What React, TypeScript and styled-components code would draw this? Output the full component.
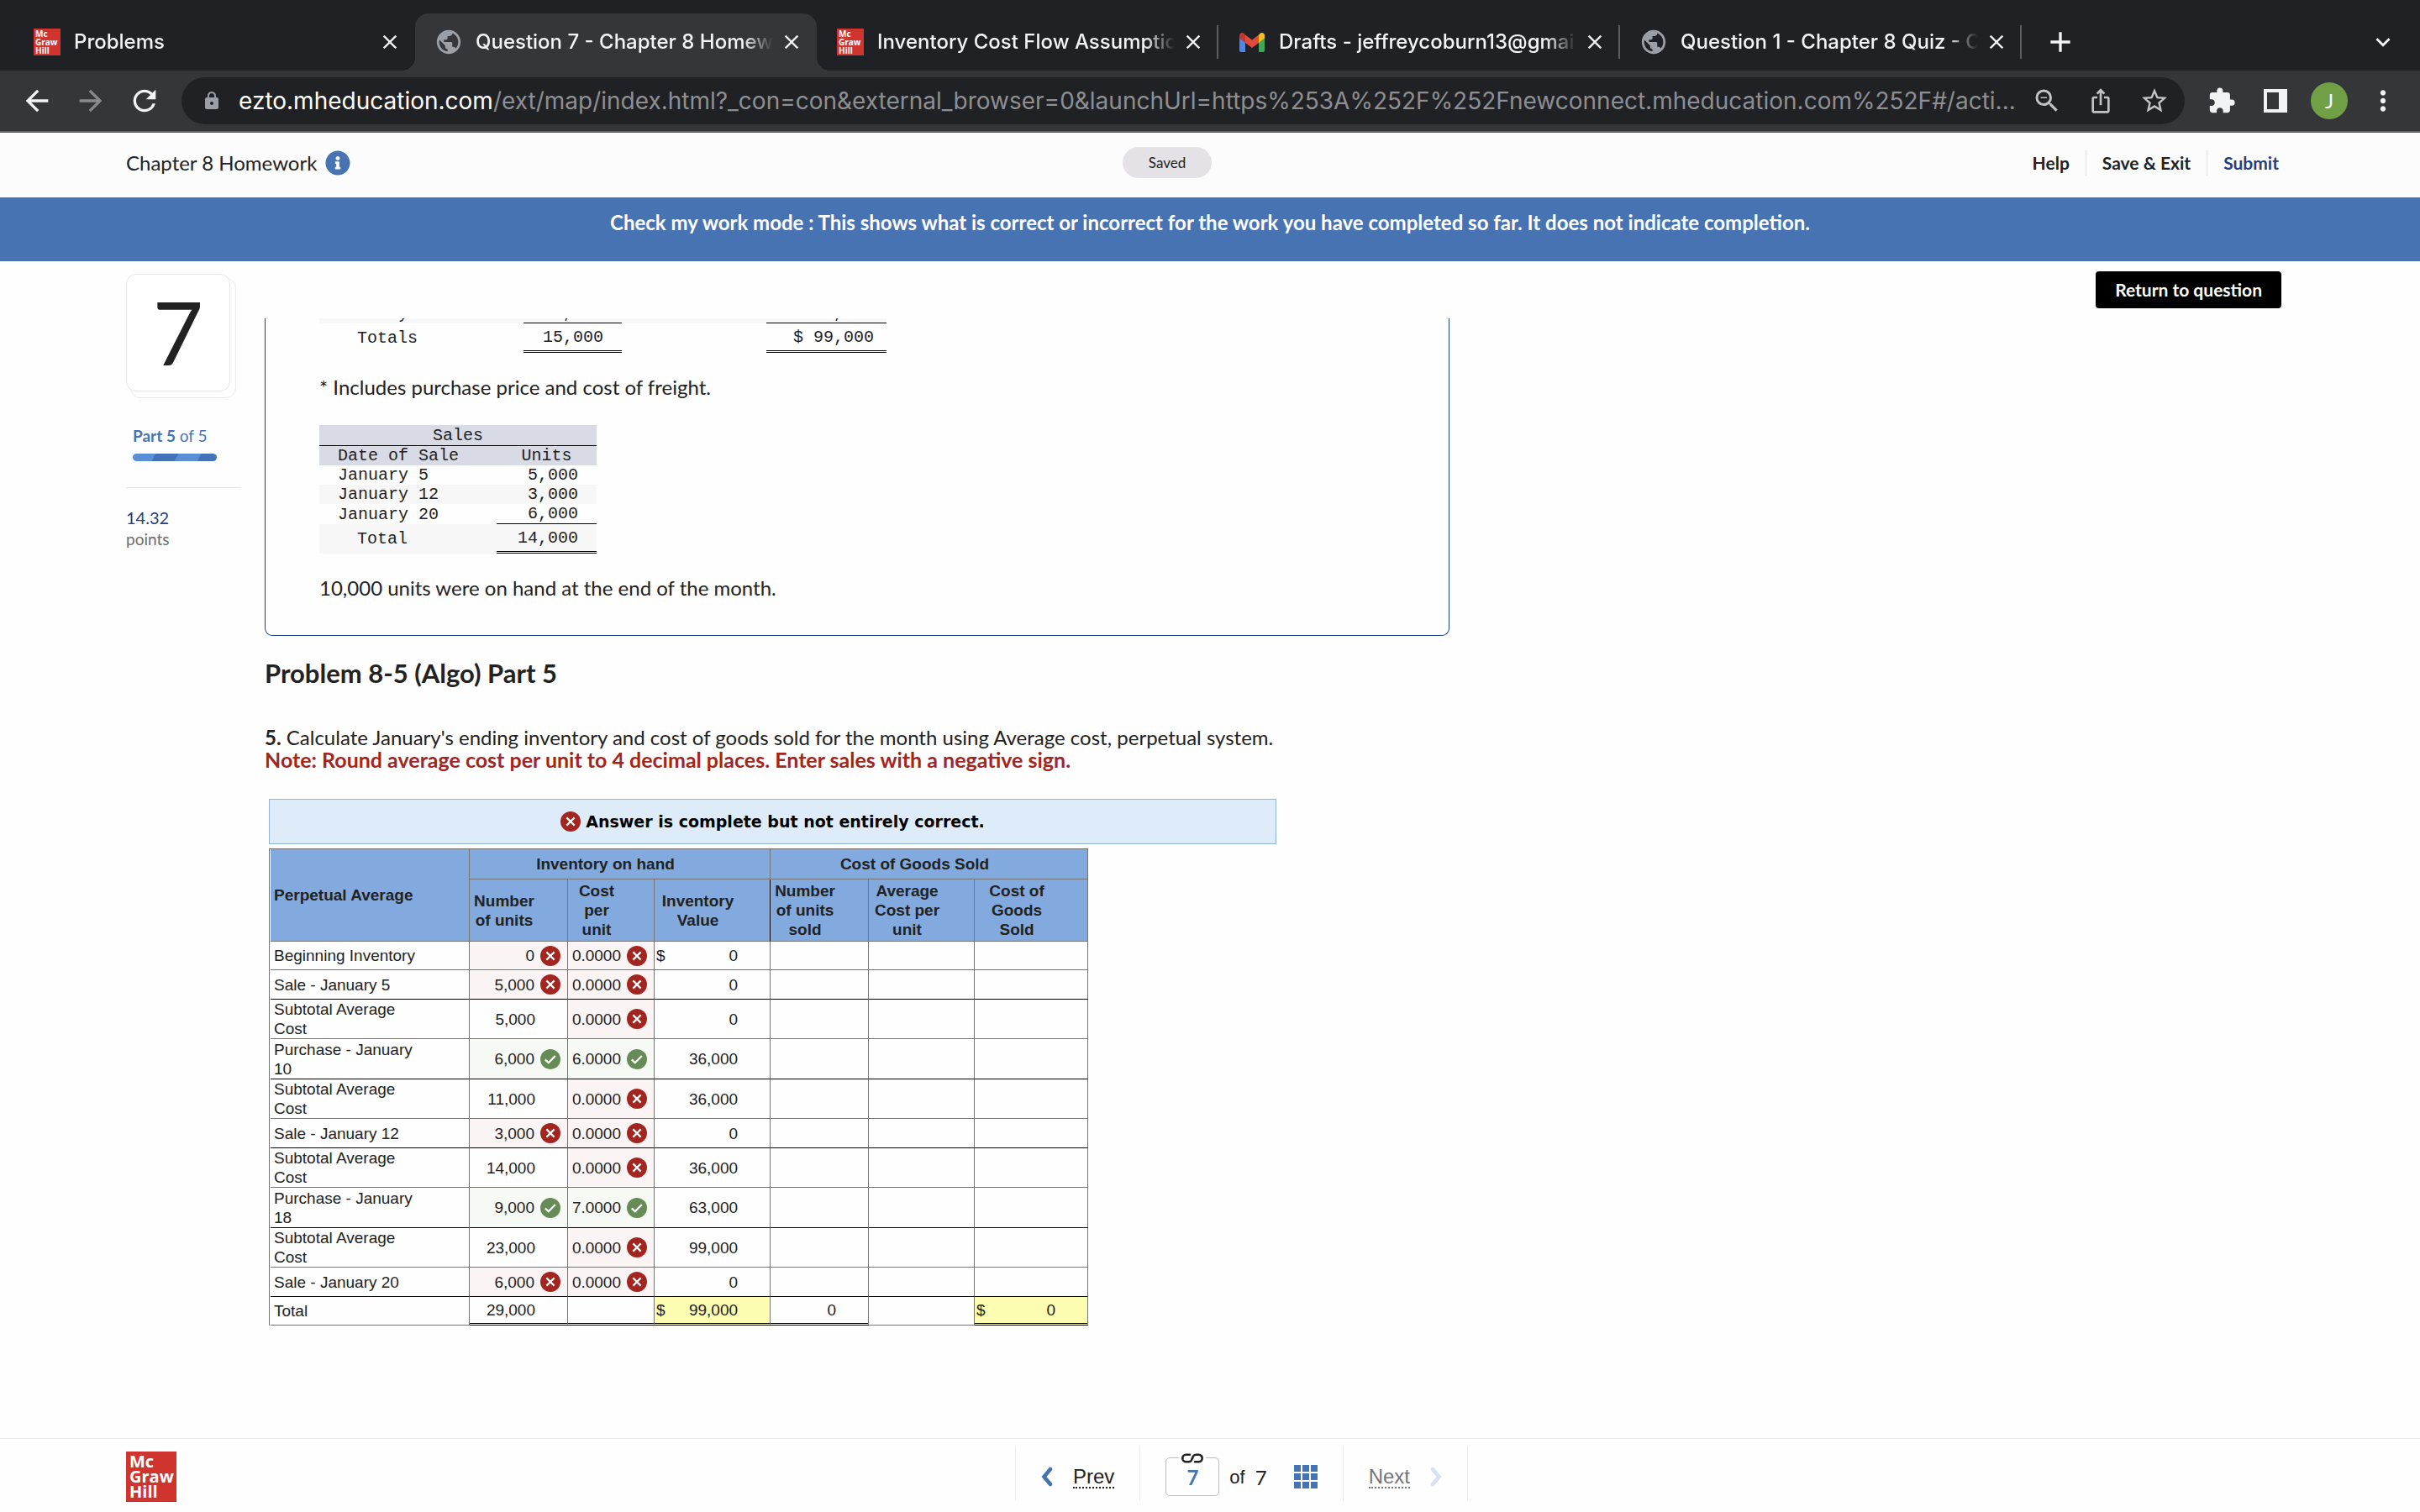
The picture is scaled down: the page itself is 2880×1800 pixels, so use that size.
import React from "react";
import styled, { createGlobalStyle, css } from "styled-components";
import {
  MdAdd,
  MdArrowBack,
  MdArrowForward,
  MdClose,
  MdExtension,
  MdIosShare,
  MdKeyboardArrowDown,
  MdLock,
  MdMoreVert,
  MdOutlineZoomOut,
  MdPublic,
  MdRefresh,
  MdStarBorder,
} from "react-icons/md";
import { FaInfoCircle } from "react-icons/fa";

const ui = '"Inter", "Liberation Sans", sans-serif';
const body = '"Lato", "Liberation Sans", sans-serif';
const sheet = '"Liberation Sans", Arial, sans-serif';
const mono = '"Liberation Mono", "Courier New", monospace';

const blue = "#4873b3";
const navy = "#1f4080";
const ink = "#222222";
const grid = "#757575";
const wrongRed = "#a2261f";
const rightGreen = "#678b57";

const GlobalStyle = createGlobalStyle`
  *, *::before, *::after { box-sizing: border-box; }
  body { margin: 0; background: #fefefe; color: ${ink}; font-family: ${body}; font-size: 24px; line-height: 27px; }
  button { border: 0; padding: 0; margin: 0; background: none; color: inherit; font: inherit; cursor: pointer; }
  h2, p { margin: 0; }
  a { color: inherit; text-decoration: none; }
  svg { display: block; flex: none; }
`;

const Page = styled.div`
  min-height: 100vh;
  display: flex;
  flex-direction: column;
`;

/* ---------- browser chrome ---------- */

const TabStrip = styled.div`
  display: flex;
  align-items: stretch;
  height: 84px;
  padding: 16px 24px 0 16px;
  background: #202124;
  color: #f3f4f6;
  font-family: ${ui};
`;

const TabBox = styled.div<{ $active?: boolean; $divider?: boolean }>`
  position: relative;
  flex: 0 1 478px;
  min-width: 0;
  display: flex;
  align-items: center;
  padding: 0 16px 0 24px;
  ${p =>
    p.$divider &&
    css`
      background: linear-gradient(#5b5d61, #5b5d61) right center / 2px 40px no-repeat;
    `}
  ${p =>
    p.$active &&
    css`
      background: #35363a;
      border-radius: 16px 16px 0 0;
      &::before,
      &::after {
        content: "";
        position: absolute;
        bottom: 0;
        width: 16px;
        height: 16px;
      }
      &::before {
        right: 100%;
        background: radial-gradient(circle at 0 0, transparent 16px, #35363a 16px);
      }
      &::after {
        left: 100%;
        background: radial-gradient(circle at 100% 0, transparent 16px, #35363a 16px);
      }
    `}
`;

const Favicon = styled.span`
  flex: none;
  width: 32px;
  margin-right: 16px;
  display: flex;
  justify-content: center;
  color: #9aa0a6;
`;

const TabTitle = styled.span`
  flex: 1;
  min-width: 0;
  overflow: hidden;
  white-space: nowrap;
  font-size: 24px;
  line-height: 32px;
  font-weight: 500;
  mask-image: linear-gradient(to left, transparent, #000 36px);
`;

const IconButton = styled.button<{ $width: number; $tone?: string }>`
  flex: none;
  width: ${p => p.$width}px;
  display: flex;
  align-items: center;
  justify-content: center;
  color: ${p => p.$tone ?? "#f1f3f4"};
`;

const TabClose = styled(IconButton)`
  margin-left: 8px;
`;

const NewTab = styled(IconButton)`
  margin: 0 auto 0 26px;
`;

const Toolbar = styled.div`
  display: flex;
  align-items: center;
  height: 74px;
  padding: 0 12px;
  background: #35363a;
  border-bottom: 2px solid #5f6066;
  font-family: ${ui};
`;

const Omnibox = styled.div`
  flex: 1;
  min-width: 0;
  display: flex;
  align-items: center;
  height: 56px;
  margin: 0 12px;
  padding: 0 4px 0 24px;
  border-radius: 28px;
  background: #202124;
  color: #9aa0a6;
`;

const Url = styled.span`
  flex: 1;
  min-width: 0;
  margin-left: 20px;
  overflow: hidden;
  white-space: nowrap;
  font-size: 28px;
  line-height: 36px;
  color: #8d8f92;
  b {
    font-weight: 400;
    color: #ffffff;
  }
`;

const Avatar = styled.span`
  width: 44px;
  height: 44px;
  border-radius: 50%;
  background: #719f46;
  color: #ffffff;
  font-family: ${body};
  font-size: 24px;
  line-height: 44px;
  text-align: center;
`;

const SidePanelIcon = styled.span`
  width: 28px;
  height: 28px;
  border: 4px solid #f1f3f4;
  border-right-width: 10px;
`;

/* ---------- publisher logo ---------- */

const Logo = styled.span<{ $size: "small" | "large" }>`
  flex: none;
  display: flex;
  flex-direction: column;
  justify-content: center;
  background: #cf342f;
  color: #ffffff;
  font-family: "Open Sans", sans-serif;
  font-weight: 700;
  ${p =>
    p.$size === "large"
      ? css`
          width: 60px;
          height: 60px;
          padding-left: 4px;
          font-size: 20px;
          line-height: 18px;
        `
      : css`
          width: 32px;
          height: 32px;
          padding-left: 2px;
          font-size: 10px;
          line-height: 10px;
        `}
`;

function McGrawHill({ size }: { size: "small" | "large" }) {
  return (
    <Logo $size={size}>
      <span>Mc</span>
      <span>Graw</span>
      <span>Hill</span>
    </Logo>
  );
}

function GmailIcon() {
  return (
    <svg width="30" height="23" viewBox="0 0 30 23">
      <path d="M0 4v17a2 2 0 0 0 2 2h5V9z" fill="#4a86f0" />
      <path d="M30 4v17a2 2 0 0 1-2 2h-5V9z" fill="#3fa757" />
      <path d="M23 2.4V12l7-5.4V3.2C30 .4 26.700-1 24.600.7z" fill="#f5bd1d" />
      <path d="M7 12V2.400l8 6.200 8-6.200V12l-8 6z" fill="#e04a3c" />
      <path d="M0 3.200v3.400L7 12V2.400L5.400.7C3.300-1 0 .4 0 3.200z" fill="#c3382d" />
    </svg>
  );
}

/* ---------- assignment header ---------- */

const Header = styled.header`
  display: flex;
  align-items: center;
  justify-content: space-between;
  height: 77px;
  padding: 0 168px 6px 150px;
  background: #fcfcfc;
`;

const Title = styled.div`
  display: flex;
  align-items: center;
  gap: 10px;
`;

const SavedPill = styled.span`
  padding: 0 31px;
  border-radius: 19px;
  background: #e4e2e6;
  font-size: 17px;
  line-height: 37px;
`;

const HeaderNav = styled.nav`
  display: flex;
  padding-left: 58px;
  font-size: 21px;
  font-weight: 700;
  line-height: 30px;
`;

const NavLink = styled.a<{ $primary?: boolean }>`
  color: ${p => (p.$primary ? navy : ink)};
  & + & {
    margin-left: 19px;
    padding-left: 19px;
    border-left: 1px solid #e4e4e4;
  }
`;

const ModeBanner = styled.div`
  height: 76px;
  padding-top: 16px;
  background: ${blue};
  color: #ffffff;
  font-weight: 700;
  line-height: 28px;
  text-align: center;
`;

/* ---------- question layout ---------- */

const Main = styled.main`
  flex: 1;
  display: grid;
  grid-template-columns: 165px 1fr;
  align-items: start;
  padding: 0 165px 60px 150px;
`;

const Sidebar = styled.aside`
  padding: 15px 28px 0 0;
`;

const NumberStack = styled.div`
  position: relative;
  padding: 0 7px 8px 0;
  width: 131px;
  &::before {
    content: "";
    position: absolute;
    inset: 5px 0 0 5px;
    border: 1px solid #ebebeb;
    border-radius: 12px;
  }
`;

const NumberCard = styled.div`
  position: relative;
  height: 140px;
  border: 1px solid #e6e6e6;
  border-radius: 12px;
  background: #ffffff;
  font-size: 104px;
  line-height: 136px;
  text-align: center;
`;

const PartLabel = styled.div`
  margin: 33px 0 9px 8px;
  color: ${blue};
  font-size: 19px;
  line-height: 24px;
`;

const PartBar = styled.div`
  width: 100px;
  height: 9px;
  margin-left: 8px;
  border-radius: 5px;
  background: repeating-linear-gradient(118deg, #5890d3 0 24px, #4372b8 24px 48px);
`;

const Points = styled.div`
  margin-top: 31px;
  padding-top: 22px;
  border-top: 1px solid #e4e4e4;
  color: #6c6c6c;
  font-size: 19px;
  line-height: 26px;
`;

const PointsValue = styled.div`
  color: ${navy};
  font-size: 20px;
`;

const ActionRow = styled.div`
  display: flex;
  justify-content: flex-end;
  padding: 12px 0;
`;

const ReturnButton = styled.button`
  height: 44px;
  padding: 0 23px 2px;
  border-radius: 4px;
  background: #000000;
  color: #ffffff;
  font-size: 21px;
  font-weight: 700;
`;

const Passage = styled.section`
  max-width: 1410px;
  overflow: hidden;
  padding: 0 64px 43px;
  border: solid ${navy};
  border-width: 0 1px 1px;
  border-radius: 0 0 9px 9px;
`;

const PassageText = styled.p`
  margin-top: 27px;
  line-height: 27px;
`;

const MonoTable = styled.table`
  border-collapse: separate;
  border-spacing: 0;
  table-layout: fixed;
  font-family: ${mono};
  font-size: 20px;
  line-height: 23px;
`;

const PurchasesTable = styled(MonoTable)`
  width: 675px;
  margin-top: -18px;
`;

const SalesTable = styled(MonoTable)`
  width: 330px;
  margin-top: 32px;
`;

const MonoRow = styled.tr<{ $fill?: string; $height: number }>`
  height: ${p => p.$height}px;
  background: ${p => p.$fill ?? "transparent"};
`;

const MonoCell = styled.td<{ $amount?: boolean; $indent?: boolean; $pad?: number; $line?: "single" | "double" }>`
  padding: 0 ${p => p.$pad ?? 0}px 0 ${p => (p.$amount ? 0 : p.$indent ? 45 : 22)}px;
  text-align: ${p => (p.$amount ? "right" : "left")};
  white-space: nowrap;
  ${p => p.$line === "single" && "border-bottom: 1px solid #000000;"}
  ${p => p.$line === "double" && "border-bottom: 3px double #000000;"}
`;

const MonoHead = styled.th<{ $line?: boolean; $left?: boolean }>`
  padding: 0 0 0 ${p => (p.$left ? 22 : 0)}px;
  font-weight: 400;
  text-align: ${p => (p.$left ? "left" : "center")};
  ${p => p.$line && "border-bottom: 1px solid #000000;"}
`;

const ProblemHeading = styled.h2`
  margin: 26px 0 45px;
  font-size: 31px;
  font-weight: 700;
  line-height: 36px;
`;

const Note = styled.p`
  color: ${wrongRed};
  font-size: 25px;
  font-weight: 700;
`;

const Answer = styled.div`
  max-width: 1204px;
  margin-top: 33px;
  padding-left: 5px;
`;

const Verdict = styled.div`
  display: flex;
  align-items: center;
  justify-content: center;
  gap: 6px;
  height: 54px;
  margin-bottom: 5px;
  border: 1px solid #93b3da;
  background: #deebf8;
  color: #000000;
  font-family: "DejaVu Sans", Verdana, sans-serif;
  font-size: 19px;
  font-weight: 700;
`;

/* ---------- answer grid ---------- */

const GridTable = styled.table`
  width: 975px;
  border-collapse: separate;
  border-spacing: 0;
  table-layout: fixed;
  padding-left: 1px;
  border: solid ${grid};
  border-width: 1px 0 0 1px;
  font-family: ${sheet};
  font-size: 19px;
  line-height: 23px;
`;

const GridHead = styled.th<{ $dark?: boolean; $left?: boolean }>`
  padding: 0 38px 0 4px;
  border: solid ${grid};
  border-width: 0 1px 1px 0;
  background: #83aadf;
  text-align: ${p => (p.$left ? "left" : "center")};
  ${p => p.$dark && "border-right-color: #000000;"}
`;

type State = "wrong" | "right" | "total" | undefined;
type Line = "thin" | "dark" | "double";

const fills = { wrong: "#fbf4f4", right: "#f7f9f5", total: "#fdfdb2" };

const GridCell = styled.td<{ $state?: State; $line: Line }>`
  padding: 0 8px 0 2px;
  border: solid ${grid};
  border-width: 0 1px 1px 0;
  background: ${p => (p.$state ? fills[p.$state] : "transparent")};
  ${p => p.$line === "dark" && "border-bottom-color: #000000;"}
  ${p => p.$line === "double" && "border-bottom: 3px double #000000;"}
`;

const RowLabel = styled.th<{ $line: Line }>`
  padding: 0 50px 0 4px;
  border: solid ${grid};
  border-width: 0 1px 1px 0;
  font-weight: 400;
  text-align: left;
  ${p => p.$line === "dark" && "border-bottom-color: #000000;"}
`;

const Value = styled.div<{ $marked: boolean }>`
  display: flex;
  align-items: center;
  justify-content: flex-end;
  gap: 7px;
  padding-right: ${p => (p.$marked ? 0 : 30)}px;
`;

const Dollar = styled.span`
  margin-right: auto;
`;

function Mark({ ok }: { ok: boolean }) {
  return (
    <svg width="24" height="24" viewBox="0 0 24 24" role="img" aria-label={ok ? "correct" : "incorrect"}>
      <circle cx="12" cy="12" r="12" fill={ok ? rightGreen : wrongRed} />
      <path
        d={ok ? "M5.800 12.400l4 3.800 8-8.200" : "M7.400 7.400l9.200 9.200M16.600 7.400l-9.200 9.200"}
        fill="none"
        stroke="#ffffff"
        strokeWidth="2.200"
      />
    </svg>
  );
}

type Cell = { text?: string; dollar?: boolean; state?: State };
type Row = { label: string; height: number; line: Line; cells: Cell[] };

const cell = (text?: string, state?: State, dollar?: boolean): Cell => ({ text, state, dollar });
const sold = [cell(), cell(), cell()];

const rows: Row[] = [
  { label: "Beginning Inventory", height: 34, line: "thin", cells: [cell("0", "wrong"), cell("0.0000", "wrong"), cell("0", undefined, true), ...sold] },
  { label: "Sale - January 5", height: 35, line: "dark", cells: [cell("5,000", "wrong"), cell("0.0000", "wrong"), cell("0"), ...sold] },
  { label: "Subtotal Average Cost", height: 47, line: "thin", cells: [cell("5,000"), cell("0.0000", "wrong"), cell("0"), ...sold] },
  { label: "Purchase - January 10", height: 48, line: "dark", cells: [cell("6,000", "right"), cell("6.0000", "right"), cell("36,000"), ...sold] },
  { label: "Subtotal Average Cost", height: 47, line: "thin", cells: [cell("11,000"), cell("0.0000", "wrong"), cell("36,000"), ...sold] },
  { label: "Sale - January 12", height: 35, line: "dark", cells: [cell("3,000", "wrong"), cell("0.0000", "wrong"), cell("0"), ...sold] },
  { label: "Subtotal Average Cost", height: 47, line: "thin", cells: [cell("14,000"), cell("0.0000", "wrong"), cell("36,000"), ...sold] },
  { label: "Purchase - January 18", height: 48, line: "dark", cells: [cell("9,000", "right"), cell("7.0000", "right"), cell("63,000"), ...sold] },
  { label: "Subtotal Average Cost", height: 47, line: "thin", cells: [cell("23,000"), cell("0.0000", "wrong"), cell("99,000"), ...sold] },
  { label: "Sale - January 20", height: 35, line: "dark", cells: [cell("6,000", "wrong"), cell("0.0000", "wrong"), cell("0"), ...sold] },
  { label: "Total", height: 34, line: "double", cells: [cell("29,000"), cell(), cell("99,000", "total", true), cell("0"), cell(), cell("0", "total", true)] },
];

const GridRow = styled.tr<{ $height: number }>`
  height: ${p => p.$height}px;
`;

const columnWidths = [237, 117, 103, 138, 117, 126, 135];

function AnswerGrid() {
  return (
    <GridTable>
      <colgroup>
        {columnWidths.map((w, i) => (
          <col key={i} width={w} />
        ))}
      </colgroup>
      <thead>
        <GridRow $height={36}>
          <GridHead rowSpan={2} $left>Perpetual Average</GridHead>
          <GridHead colSpan={3}>Inventory on hand</GridHead>
          <GridHead colSpan={3}>Cost of Goods Sold</GridHead>
        </GridRow>
        <GridRow $height={74}>
          <GridHead>Number of units</GridHead>
          <GridHead>Cost per unit</GridHead>
          <GridHead $dark>Inventory Value</GridHead>
          <GridHead>Number of units sold</GridHead>
          <GridHead>Average Cost per unit</GridHead>
          <GridHead>Cost of Goods Sold</GridHead>
        </GridRow>
      </thead>
      <tbody>
        {rows.map((row, r) => (
          <GridRow key={r} $height={row.height}>
            <RowLabel scope="row" $line={row.line}>{row.label}</RowLabel>
            {row.cells.map((c, i) => {
              const marked = c.state === "wrong" || c.state === "right";
              const line = row.line === "double" && i === 4 ? "thin" : row.line;
              return (
                <GridCell key={i} $state={c.state} $line={line}>
                  {c.text && (
                    <Value $marked={marked}>
                      {c.dollar && <Dollar>$</Dollar>}
                      {c.text}
                      {marked && <Mark ok={c.state === "right"} />}
                    </Value>
                  )}
                </GridCell>
              );
            })}
          </GridRow>
        ))}
      </tbody>
    </GridTable>
  );
}

/* ---------- footer ---------- */

const Footer = styled.footer`
  display: grid;
  grid-template-columns: 60px 1fr;
  align-items: start;
  height: 88px;
  padding: 8px 135px 0 150px;
  border-top: 1px solid #ececec;
`;

const FooterLogo = styled.div`
  padding-top: 7px;
`;

const Pager = styled.nav`
  justify-self: center;
  display: flex;
  height: 66px;
  border: solid #ececec;
  border-width: 0 1px;
  font-family: ${sheet};
`;

const PagerPart = styled.div`
  display: flex;
  align-items: center;
  padding: 8px 30px 0;
  & + & {
    border-left: 1px solid #ececec;
  }
`;

const PagerLink = styled.a<{ $off?: boolean }>`
  display: flex;
  align-items: center;
  gap: 24px;
  color: ${p => (p.$off ? grid : ink)};
`;

const PagerWord = styled.span`
  margin-top: 2px;
  border-bottom: 2px dotted currentColor;
  line-height: 24px;
`;

const PageField = styled.label`
  position: relative;
  margin-right: 12px;
  svg {
    position: absolute;
    top: -5px;
    left: 16px;
    background: #fefefe;
  }
`;

const PageInput = styled.input`
  display: block;
  width: 64px;
  height: 46px;
  padding: 0;
  border: 1px solid #bdbdbd;
  border-radius: 5px;
  background: transparent;
  color: ${blue};
  font-family: ${body};
  font-size: 24px;
  font-weight: 700;
  text-align: center;
`;

const PageCount = styled.span`
  display: flex;
  gap: 12px;
  margin-right: 32px;
  font-size: 22px;
`;

const PageTotal = styled.span`
  font-family: ${body};
  font-size: 24px;
`;

const GridButton = styled.button`
  display: grid;
  grid-template-columns: repeat(3, 8px);
  gap: 2px;
  i {
    height: 8px;
    background: ${blue};
  }
`;

function Chevron({ flip, tone }: { flip?: boolean; tone: string }) {
  return (
    <svg width="14" height="24" viewBox="0 0 14 24">
      <path d={flip ? "M3 3l7.500 9L3 21" : "M11 3L3.500 12l7.500 9"} fill="none" stroke={tone} strokeWidth="4.600" strokeLinecap="round" />
    </svg>
  );
}

function ChainIcon() {
  return (
    <svg width="32" height="12" viewBox="0 0 32 12">
      <path
        d="M13 1.800H8.500a4.200 4.200 0 0 0 0 8.400H11.500a4.200 4.200 0 0 0 4.200-4M19 10.200H23.500a4.200 4.200 0 0 0 0-8.400H20.500a4.200 4.200 0 0 0-4.200 4"
        fill="none"
        stroke="#222222"
        strokeWidth="2.600"
        strokeLinecap="round"
      />
    </svg>
  );
}

/* ---------- page ---------- */

const tabs: { title: string; icon: "logo" | "globe" | "mail"; active?: boolean; divider?: boolean }[] = [
  { title: "Problems", icon: "logo" },
  { title: "Question 7 - Chapter 8 Homework", icon: "globe", active: true },
  { title: "Inventory Cost Flow Assumptions", icon: "logo", divider: true },
  { title: "Drafts - jeffreycoburn13@gmail.com", icon: "mail", divider: true },
  { title: "Question 1 - Chapter 8 Quiz - Connect", icon: "globe", divider: true },
];

export default function App() {
  return (
    <Page>
      <GlobalStyle />
      <TabStrip>
        {tabs.map(t => (
          <TabBox key={t.title} $active={t.active} $divider={t.divider}>
            <Favicon>
              {t.icon === "logo" && <McGrawHill size="small" />}
              {t.icon === "globe" && <MdPublic size={34} />}
              {t.icon === "mail" && <GmailIcon />}
            </Favicon>
            <TabTitle>{t.title}</TabTitle>
            <TabClose $width={28} aria-label="Close tab"><MdClose size={28} /></TabClose>
          </TabBox>
        ))}
        <NewTab $width={40} aria-label="New tab"><MdAdd size={40} /></NewTab>
        <IconButton $width={40} aria-label="Search tabs"><MdKeyboardArrowDown size={34} /></IconButton>
      </TabStrip>

      <Toolbar>
        <IconButton $width={64} aria-label="Back"><MdArrowBack size={40} /></IconButton>
        <IconButton $width={64} $tone="#88898c" aria-label="Forward"><MdArrowForward size={40} /></IconButton>
        <IconButton $width={64} aria-label="Reload"><MdRefresh size={40} /></IconButton>
        <Omnibox>
          <MdLock size={24} />
          <Url>
            <b>ezto.mheducation.com</b>/ext/map/index.html?_con=con&amp;external_browser=0&amp;launchUrl=https%253A%252F%252Fnewconnect.mheducation.com%252F#/acti...
          </Url>
          <IconButton $width={64} $tone="#c2c3c5" aria-label="Zoom"><MdOutlineZoomOut size={36} /></IconButton>
          <IconButton $width={64} $tone="#c2c3c5" aria-label="Share"><MdIosShare size={32} /></IconButton>
          <IconButton $width={64} $tone="#c2c3c5" aria-label="Bookmark"><MdStarBorder size={36} /></IconButton>
        </Omnibox>
        <IconButton $width={64} aria-label="Extensions"><MdExtension size={34} /></IconButton>
        <IconButton $width={64} aria-label="Side panel"><SidePanelIcon /></IconButton>
        <IconButton $width={64} aria-label="Profile"><Avatar>J</Avatar></IconButton>
        <IconButton $width={64} aria-label="Menu"><MdMoreVert size={38} /></IconButton>
      </Toolbar>

      <Header>
        <Title>
          Chapter 8 Homework
          <FaInfoCircle size={30} color={blue} />
        </Title>
        <SavedPill>Saved</SavedPill>
        <HeaderNav>
          <NavLink href="#help">Help</NavLink>
          <NavLink href="#exit">Save &amp; Exit</NavLink>
          <NavLink href="#submit" $primary>Submit</NavLink>
        </HeaderNav>
      </Header>
      <ModeBanner>
        Check my work mode : This shows what is correct or incorrect for the work you have completed so far. It does not indicate completion.
      </ModeBanner>

      <Main>
        <Sidebar>
          <NumberStack>
            <NumberCard>7</NumberCard>
          </NumberStack>
          <PartLabel><b>Part 5</b> of 5</PartLabel>
          <PartBar />
          <Points>
            <PointsValue>14.32</PointsValue>
            points
          </Points>
        </Sidebar>

        <div>
          <ActionRow>
            <ReturnButton>Return to question</ReturnButton>
          </ActionRow>

          <Passage>
            <PurchasesTable>
              <colgroup>
                <col width={243} />
                <col width={117} />
                <col width={172} />
                <col width={143} />
              </colgroup>
              <tbody>
                <MonoRow $height={23} $fill="#f7f7f7">
                  <MonoCell>January 18</MonoCell>
                  <MonoCell $amount $pad={22} $line="single">9,000</MonoCell>
                  <MonoCell />
                  <MonoCell $amount $pad={15} $line="single">63,000</MonoCell>
                </MonoRow>
                <MonoRow $height={35}>
                  <MonoCell $indent>Totals</MonoCell>
                  <MonoCell $amount $pad={22} $line="double">15,000</MonoCell>
                  <MonoCell />
                  <MonoCell $amount $pad={15} $line="double">$ 99,000</MonoCell>
                </MonoRow>
              </tbody>
            </PurchasesTable>
            <PassageText>* Includes purchase price and cost of freight.</PassageText>

            <SalesTable>
              <colgroup>
                <col width={211} />
                <col width={119} />
              </colgroup>
              <thead>
                <MonoRow $height={25} $fill="#d8dbe5">
                  <MonoHead colSpan={2} $line>Sales</MonoHead>
                </MonoRow>
                <MonoRow $height={23} $fill="#d8dbe5">
                  <MonoHead $left>Date of Sale</MonoHead>
                  <MonoHead>Units</MonoHead>
                </MonoRow>
              </thead>
              <tbody>
                <MonoRow $height={23}>
                  <MonoCell>January 5</MonoCell>
                  <MonoCell $amount $pad={22}>5,000</MonoCell>
                </MonoRow>
                <MonoRow $height={23} $fill="#f7f7f7">
                  <MonoCell>January 12</MonoCell>
                  <MonoCell $amount $pad={22}>3,000</MonoCell>
                </MonoRow>
                <MonoRow $height={24}>
                  <MonoCell>January 20</MonoCell>
                  <MonoCell $amount $pad={22} $line="single">6,000</MonoCell>
                </MonoRow>
                <MonoRow $height={35} $fill="#f7f7f7">
                  <MonoCell $indent>Total</MonoCell>
                  <MonoCell $amount $pad={22} $line="double">14,000</MonoCell>
                </MonoRow>
              </tbody>
            </SalesTable>
            <PassageText>10,000 units were on hand at the end of the month.</PassageText>
          </Passage>

          <ProblemHeading>Problem 8-5 (Algo) Part 5</ProblemHeading>
          <p>
            <b>5.</b> Calculate January's ending inventory and cost of goods sold for the month using Average cost, perpetual system.
          </p>
          <Note>Note: Round average cost per unit to 4 decimal places. Enter sales with a negative sign.</Note>

          <Answer>
            <Verdict>
              <Mark ok={false} />
              Answer is complete but not entirely correct.
            </Verdict>
            <AnswerGrid />
          </Answer>
        </div>
      </Main>

      <Footer>
        <FooterLogo><McGrawHill size="large" /></FooterLogo>
        <Pager>
          <PagerPart>
            <PagerLink href="#prev">
              <Chevron tone={blue} />
              <PagerWord>Prev</PagerWord>
            </PagerLink>
          </PagerPart>
          <PagerPart>
            <PageField>
              <PageInput aria-label="Question number" defaultValue="7" />
              <ChainIcon />
            </PageField>
            <PageCount>
              <span>of</span>
              <PageTotal>7</PageTotal>
            </PageCount>
            <GridButton aria-label="Question list">
              {Array.from({ length: 9 }, (_, i) => <i key={i} />)}
            </GridButton>
          </PagerPart>
          <PagerPart>
            <PagerLink href="#next" $off>
              <PagerWord>Next</PagerWord>
              <Chevron flip tone="#d6e2f1" />
            </PagerLink>
          </PagerPart>
        </Pager>
      </Footer>
    </Page>
  );
}
